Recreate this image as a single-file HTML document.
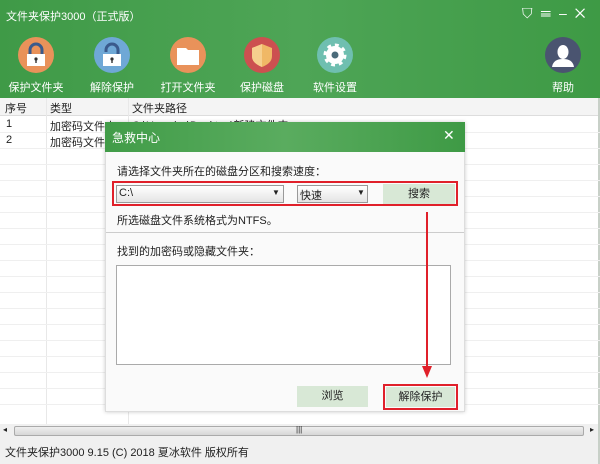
<!DOCTYPE html>
<html><head><meta charset="utf-8"><style>
*{margin:0;padding:0;box-sizing:border-box}
body{width:600px;height:464px;overflow:hidden;background:#fff;font-family:"Liberation Sans","Noto Sans CJK SC",sans-serif;font-size:11px;color:#222;position:relative}
.a{position:absolute}
.hdr{left:0;top:0;width:600px;height:98px;background:linear-gradient(90deg,#3f9a47,#4ea556 50%,#3e9a45)}
.t{color:#fff;white-space:nowrap}
.ic{width:36px;height:36px;border-radius:50%}
.lab{color:#fff;font-size:11px;width:80px;text-align:center}
.cell{font-size:11px;white-space:nowrap}
.hl{left:0;width:600px;height:1px;background:#efefef}
.btn{background:#d8e8d6;text-align:center;font-size:11px}
</style></head><body>
<div class="a hdr"></div>
<div class="a t" style="left:6px;top:8px;font-size:11px">文件夹保护3000（正式版）</div>
<div class="a t" style="left:522px;top:5px;font-size:14px;letter-spacing:8px">⛉☰–✕</div>

<div class="a ic" style="left:18px;top:37px;background:#e9925a"></div>
<svg class="a" style="left:18px;top:37px" width="36" height="36"><path d="M12 18v-5a6 6 0 0 1 12 0v5" stroke="#3a5a8c" stroke-width="3" fill="none"/><rect x="9" y="17" width="18" height="12" fill="#fff"/><circle cx="18" cy="22" r="1.6" fill="#333"/><rect x="17.3" y="22" width="1.4" height="4" fill="#333"/></svg>
<div class="a ic" style="left:94px;top:37px;background:#6fa8d6"></div>
<svg class="a" style="left:94px;top:37px" width="36" height="36"><path d="M12 15v-2a6 6 0 0 1 12 0v5" stroke="#3a5a8c" stroke-width="3" fill="none"/><rect x="9" y="17" width="18" height="12" fill="#fff"/><circle cx="18" cy="22" r="1.6" fill="#333"/><rect x="17.3" y="22" width="1.4" height="4" fill="#333"/></svg>
<div class="a ic" style="left:170px;top:37px;background:#e9925a"></div>
<svg class="a" style="left:170px;top:37px" width="36" height="36"><path d="M7 11h9l2 2h11v15H7z" fill="#fff"/></svg>
<div class="a ic" style="left:244px;top:37px;background:#cc5050"></div>
<svg class="a" style="left:244px;top:37px" width="36" height="36"><path d="M18 7l10 4v8c0 6-5 9-10 11-5-2-10-5-10-11v-8z" fill="#f0b866"/><path d="M18 7v23c-5-2-10-5-10-11v-8z" fill="#f6cf8e"/></svg>
<div class="a ic" style="left:317px;top:37px;background:#6fbfb0"></div>
<svg class="a" style="left:317px;top:37px" width="36" height="36"><circle cx="18" cy="18" r="9" fill="#fff" stroke="#fff" stroke-width="5" stroke-dasharray="3.5 3.5"/><circle cx="18" cy="18" r="6.5" fill="#fff"/><circle cx="18" cy="18" r="3.5" fill="#4a6b7a"/></svg>
<div class="a ic" style="left:545px;top:37px;background:#4a5470"></div>
<svg class="a" style="left:545px;top:37px" width="36" height="36"><ellipse cx="18" cy="15" rx="5.5" ry="7" fill="#fff"/><path d="M7 30c1-6 5-8 11-8s10 2 11 8z" fill="#fff"/></svg>
<div class="a lab" style="left:-4px;top:79px">保护文件夹</div>
<div class="a lab" style="left:72px;top:79px">解除保护</div>
<div class="a lab" style="left:148px;top:79px">打开文件夹</div>
<div class="a lab" style="left:222px;top:79px">保护磁盘</div>
<div class="a lab" style="left:295px;top:79px">软件设置</div>
<div class="a lab" style="left:523px;top:79px">帮助</div>

<div class="a" style="left:0;top:98px;width:598px;height:18px;background:#f4f4f4;border-bottom:1px solid #ddd"></div>
<div class="a" style="left:46px;top:98px;width:1px;height:326px;background:#e8e8e8"></div>
<div class="a" style="left:128px;top:98px;width:1px;height:326px;background:#e8e8e8"></div>
<div class="a" style="left:598px;top:98px;width:2px;height:366px;background:#c8d0c8"></div>
<div class="a cell" style="left:5px;top:100px">序号</div>
<div class="a cell" style="left:50px;top:100px">类型</div>
<div class="a cell" style="left:132px;top:100px">文件夹路径</div>
<div class="a hl" style="top:132px"></div><div class="a hl" style="top:148px"></div><div class="a hl" style="top:164px"></div><div class="a hl" style="top:180px"></div><div class="a hl" style="top:196px"></div><div class="a hl" style="top:212px"></div><div class="a hl" style="top:228px"></div><div class="a hl" style="top:244px"></div><div class="a hl" style="top:260px"></div><div class="a hl" style="top:276px"></div><div class="a hl" style="top:292px"></div><div class="a hl" style="top:308px"></div><div class="a hl" style="top:324px"></div><div class="a hl" style="top:340px"></div><div class="a hl" style="top:356px"></div><div class="a hl" style="top:372px"></div><div class="a hl" style="top:388px"></div><div class="a hl" style="top:404px"></div>
<div class="a cell" style="left:6px;top:118px">1</div>
<div class="a cell" style="left:50px;top:118px">加密码文件夹</div>
<div class="a cell" style="left:132px;top:117px">C:\Users\...\Desktop\新建文件夹</div>
<div class="a cell" style="left:6px;top:134px">2</div>
<div class="a cell" style="left:50px;top:134px">加密码文件夹</div>

<!-- dialog -->
<div class="a" style="left:105px;top:122px;width:360px;height:290px;background:#fafafa;border:1px solid #ddd;box-shadow:0 0 4px rgba(0,0,0,.2)"></div>
<div class="a" style="left:105px;top:122px;width:360px;height:30px;background:linear-gradient(90deg,#419c48,#5aac5f 50%,#3e9a45)"></div>
<div class="a t" style="left:112px;top:129px;font-size:12px">急救中心</div>
<div class="a t" style="left:443px;top:127px;font-size:14px">✕</div>
<div class="a cell" style="left:117px;top:163px">请选择文件夹所在的磁盘分区和搜索速度：</div>
<div class="a" style="left:112px;top:181px;width:346px;height:25px;border:2px solid #e0202a"></div>
<div class="a" style="left:116px;top:185px;width:168px;height:18px;background:linear-gradient(#fff,#e4e4e4);border:1px solid #999"></div>
<div class="a cell" style="left:119px;top:187px">C:\</div>
<div class="a cell" style="left:272px;top:188px;font-size:8px">▼</div>
<div class="a" style="left:297px;top:185px;width:71px;height:18px;background:linear-gradient(#fff,#e4e4e4);border:1px solid #999"></div>
<div class="a cell" style="left:300px;top:187px">快速</div>
<div class="a cell" style="left:357px;top:188px;font-size:8px">▼</div>
<div class="a btn" style="left:383px;top:184px;width:72px;height:20px;line-height:20px">搜索</div>
<div class="a cell" style="left:117px;top:212px">所选磁盘文件系统格式为NTFS。</div>
<div class="a" style="left:106px;top:232px;width:358px;height:1px;background:#ccc"></div>
<div class="a cell" style="left:117px;top:243px">找到的加密码或隐藏文件夹：</div>
<div class="a" style="left:116px;top:265px;width:335px;height:100px;background:#fff;border:1px solid #aaa"></div>
<div class="a btn" style="left:297px;top:386px;width:71px;height:21px;line-height:21px">浏览</div>
<div class="a" style="left:383px;top:384px;width:75px;height:26px;border:2px solid #e0202a"></div>
<div class="a btn" style="left:386px;top:387px;width:69px;height:20px;line-height:20px">解除保护</div>
<svg class="a" style="left:420px;top:210px" width="16" height="172"><line x1="7" y1="2" x2="7" y2="160" stroke="#e0202a" stroke-width="2"/><path d="M2 156l5 12 5-12z" fill="#e0202a"/></svg>

<!-- scrollbar & status -->
<div class="a" style="left:0;top:424px;width:598px;height:14px;background:#f0f0f0"></div>
<div class="a" style="left:14px;top:426px;width:570px;height:10px;background:linear-gradient(#eee,#d6d6d6);border:1px solid #aaa;border-radius:2px"></div>
<div class="a cell" style="left:296px;top:425px;font-size:8px">|||</div>
<div class="a cell" style="left:3px;top:425px;font-size:8px">◂</div>
<div class="a cell" style="left:590px;top:425px;font-size:8px">▸</div>
<div class="a" style="left:0;top:438px;width:598px;height:26px;background:#f0f0f0"></div>
<div class="a cell" style="left:5px;top:444px">文件夹保护3000 9.15 (C) 2018 夏冰软件 版权所有</div>
</body></html>
